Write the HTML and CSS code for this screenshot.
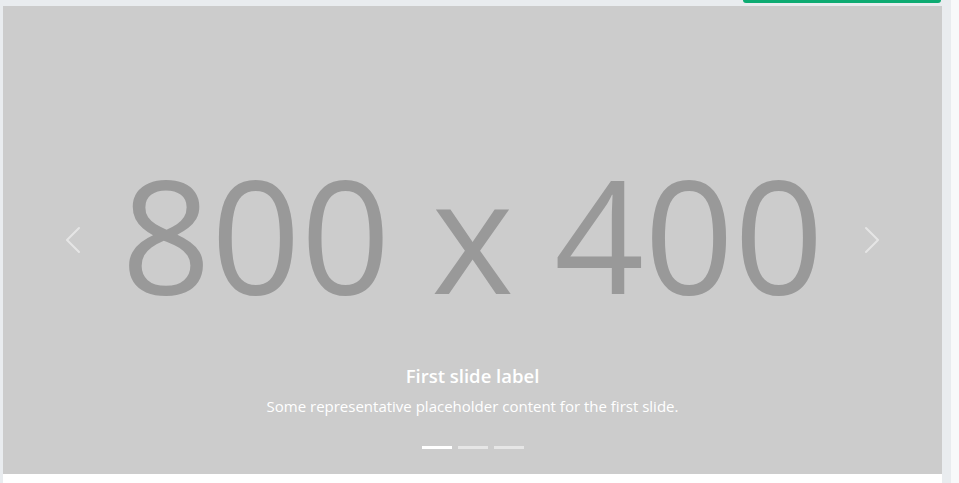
FILE: index.html
```html
<!DOCTYPE html>
<html lang="en">
<head>
<meta charset="utf-8">
<title>Carousel</title>
<link rel="stylesheet" href="styles.css">
</head>
<body>
<div class="page">
  <div class="main">
    <div class="topbar"><span class="btn-success"></span></div>
    <div class="carousel">
      <div class="slide-img">800 x 400</div>
      <button class="control control-prev" aria-label="Previous">
        <svg width="32" height="32" viewBox="0 0 16 16" fill="#fff"><path d="M11.354 1.646a.5.5 0 0 1 0 .708L5.707 8l5.647 5.646a.5.5 0 0 1-.708.708l-6-6a.5.5 0 0 1 0-.708l6-6a.5.5 0 0 1 .708 0z"/></svg>
      </button>
      <button class="control control-next" aria-label="Next">
        <svg width="32" height="32" viewBox="0 0 16 16" fill="#fff"><path d="M4.646 1.646a.5.5 0 0 1 .708 0l6 6a.5.5 0 0 1 0 .708l-6 6a.5.5 0 0 1-.708-.708L10.293 8 4.646 2.354a.5.5 0 0 1 0-.708z"/></svg>
      </button>
      <div class="caption">
        <h5 class="caption-title">First slide label</h5>
        <p class="caption-text">Some representative placeholder content for the first slide.</p>
      </div>
      <div class="indicators">
        <span class="ind active"></span>
        <span class="ind"></span>
        <span class="ind"></span>
      </div>
    </div>
    <div class="below"></div>
  </div>
  <div class="strip"></div>
  <div class="strip-light"></div>
</div>
</body>
</html>
```

FILE: styles.css
```css
html, body {
  margin: 0;
  padding: 0;
}
body {
  font-family: "Open Sans", "Noto Sans", sans-serif;
  background: #fff;
}
.page {
  display: flex;
  height: 483px;
  overflow: hidden;
}
.main {
  flex: 0 0 939px;
  display: flex;
  flex-direction: column;
  padding-left: 3px;
  background: #e9ecef;
}
.topbar {
  height: 6px;
  display: flex;
  justify-content: flex-end;
  align-items: flex-start;
}
.btn-success {
  width: 198px;
  height: 3px;
  margin-right: 1px;
  background: #0dab72;
  border-radius: 0 0 4px 4px;
}
.carousel {
  position: relative;
  height: 468px;
  background: #cccccc;
  overflow: hidden;
}
.slide-img {
  height: 100%;
  display: flex;
  align-items: center;
  justify-content: center;
  font-family: "Open Sans", sans-serif;
  font-size: 157px;
  color: #999999;
  line-height: 1;
  padding-bottom: 14px;
  box-sizing: border-box;
}
.control {
  position: absolute;
  top: 0;
  bottom: 0;
  width: 15%;
  display: flex;
  align-items: center;
  justify-content: center;
  padding: 0;
  border: 0;
  background: none;
  opacity: 0.5;
}
.control svg {
  display: block;
}
.control-prev { left: 0; }
.control-next { right: 0; }
.caption {
  position: absolute;
  left: 15%;
  right: 15%;
  bottom: 57px;
  text-align: center;
  color: #fff;
}
.caption-title {
  margin: 0 0 7px;
  font-size: 18.5px;
  font-weight: 600;
  line-height: 1.2;
}
.caption-text {
  margin: 0;
  font-size: 15px;
  line-height: 1.5;
}
.indicators {
  position: absolute;
  left: 0;
  right: 0;
  bottom: 25px;
  display: flex;
  justify-content: center;
  gap: 6px;
  padding-left: 1px;
}
.ind {
  width: 30px;
  height: 3px;
  background: #fff;
  opacity: 0.5;
}
.ind.active {
  opacity: 1;
}
.below {
  flex: 1;
  background: #fff;
}
.strip {
  flex: 0 0 9px;
  background: #e9ecef;
}
.strip-light {
  flex: 1;
  background: #f8f9fa;
}
```
